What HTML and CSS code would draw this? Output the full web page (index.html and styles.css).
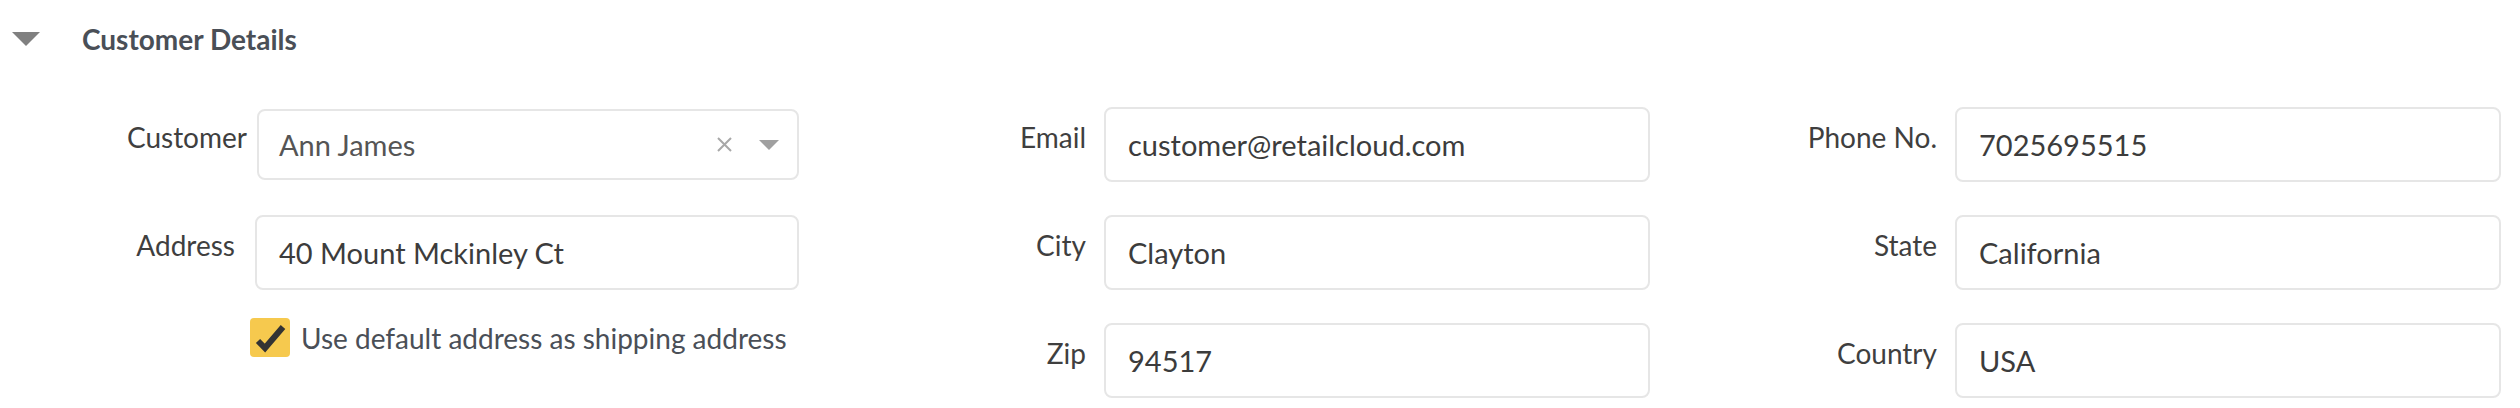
FILE: index.html
```html
<!DOCTYPE html>
<html lang="en">
<head>
<meta charset="utf-8">
<title>Customer Details</title>
<link rel="stylesheet" href="styles.css">
</head>
<body>
<section class="panel">
  <header class="panel-head">
    <svg class="toggle" width="28" height="14" viewBox="0 0 28 14"><polygon points="0,0 28,0 14,14" fill="#808080"/></svg>
    <h2 class="panel-title">Customer Details</h2>
  </header>
  <div class="form-grid">
    <div class="field field--first field--customer">
      <label class="field-label">Customer</label>
      <div class="select-box">
        <span class="select-value">Ann James</span>
        <svg class="select-clear" width="15" height="15" viewBox="0 0 15 15"><path d="M1 1 L14 14 M14 1 L1 14" stroke="#a8a8a8" stroke-width="2" fill="none"/></svg>
        <svg class="select-caret" width="20" height="10" viewBox="0 0 20 10"><polygon points="0,0 20,0 10,10" fill="#a0a0a0"/></svg>
      </div>
    </div>
    <div class="field">
      <label class="field-label">Email</label>
      <div class="input-box">customer@retailcloud.com</div>
    </div>
    <div class="field">
      <label class="field-label">Phone No.</label>
      <div class="input-box">7025695515</div>
    </div>

    <div class="field field--first">
      <label class="field-label">Address</label>
      <div class="input-box">40 Mount Mckinley Ct</div>
    </div>
    <div class="field">
      <label class="field-label">City</label>
      <div class="input-box">Clayton</div>
    </div>
    <div class="field">
      <label class="field-label">State</label>
      <div class="input-box">California</div>
    </div>

    <div class="check-row">
      <span class="checkbox">
        <svg width="40" height="39" viewBox="0 0 40 39"><path d="M8 23 L15 30 L33 9" stroke="#333" stroke-width="6" fill="none"/></svg>
      </span>
      <span class="check-label">Use default address as shipping address</span>
    </div>
    <div class="field">
      <label class="field-label">Zip</label>
      <div class="input-box">94517</div>
    </div>
    <div class="field">
      <label class="field-label">Country</label>
      <div class="input-box">USA</div>
    </div>
  </div>
</section>
</body>
</html>
```

FILE: styles.css
```css
html, body {
  margin: 0;
  padding: 0;
  background: #ffffff;
}

body {
  font-family: Lato, "Open Sans", "Liberation Sans", sans-serif;
  color: #404040;
}

.panel {
  width: 2520px;
}

.panel-head {
  display: flex;
  align-items: center;
  height: 78px;
  padding-left: 12px;
  gap: 42px;
}

.toggle {
  display: block;
  flex: none;
}

.panel-title {
  margin: 0;
  font-size: 28px;
  font-weight: 700;
  color: #4a4f57;
  line-height: 34px;
}

.form-grid {
  margin-top: 29px;
  display: grid;
  grid-template-columns: 799px 851px 851px;
  grid-auto-rows: 75px;
  row-gap: 33px;
}

.field {
  display: flex;
  align-items: flex-start;
  height: 75px;
}

.field-label {
  flex: none;
  width: 305px;
  box-sizing: border-box;
  padding-right: 18px;
  padding-top: 13px;
  text-align: right;
  font-size: 28px;
  line-height: 34px;
  color: #3f3f3f;
}

.field--first .field-label {
  width: 255px;
  padding-right: 20px;
}

.field--customer .field-label {
  width: 257px;
  padding-right: 10px;
}

.input-box {
  flex: 1;
  height: 75px;
  box-sizing: border-box;
  border: 2px solid #e6e6e6;
  border-radius: 8px;
  padding: 0 22px;
  display: flex;
  align-items: center;
  font-size: 29px;
  line-height: 34px;
  color: #3c3c3c;
}

.select-box {
  flex: 1;
  height: 71px;
  margin-top: 2px;
  box-sizing: border-box;
  border: 2px solid #e6e6e6;
  border-radius: 8px;
  padding: 0 18px 0 20px;
  display: flex;
  align-items: center;
  font-size: 29px;
  line-height: 34px;
  color: #555555;
}

.select-value {
  flex: 1;
}

.select-clear {
  display: block;
  flex: none;
  margin-right: 27px;
}

.select-caret {
  display: block;
  flex: none;
}

.check-row {
  display: flex;
  align-items: center;
  height: 39px;
  margin-top: -5px;
  padding-left: 250px;
  gap: 11px;
}

.checkbox {
  flex: none;
  width: 40px;
  height: 39px;
  background: #f6c94e;
  border-radius: 4px;
  display: block;
}

.checkbox svg {
  display: block;
}

.check-label {
  font-size: 28px;
  line-height: 34px;
  color: #4a4f57;
  white-space: nowrap;
}
```
